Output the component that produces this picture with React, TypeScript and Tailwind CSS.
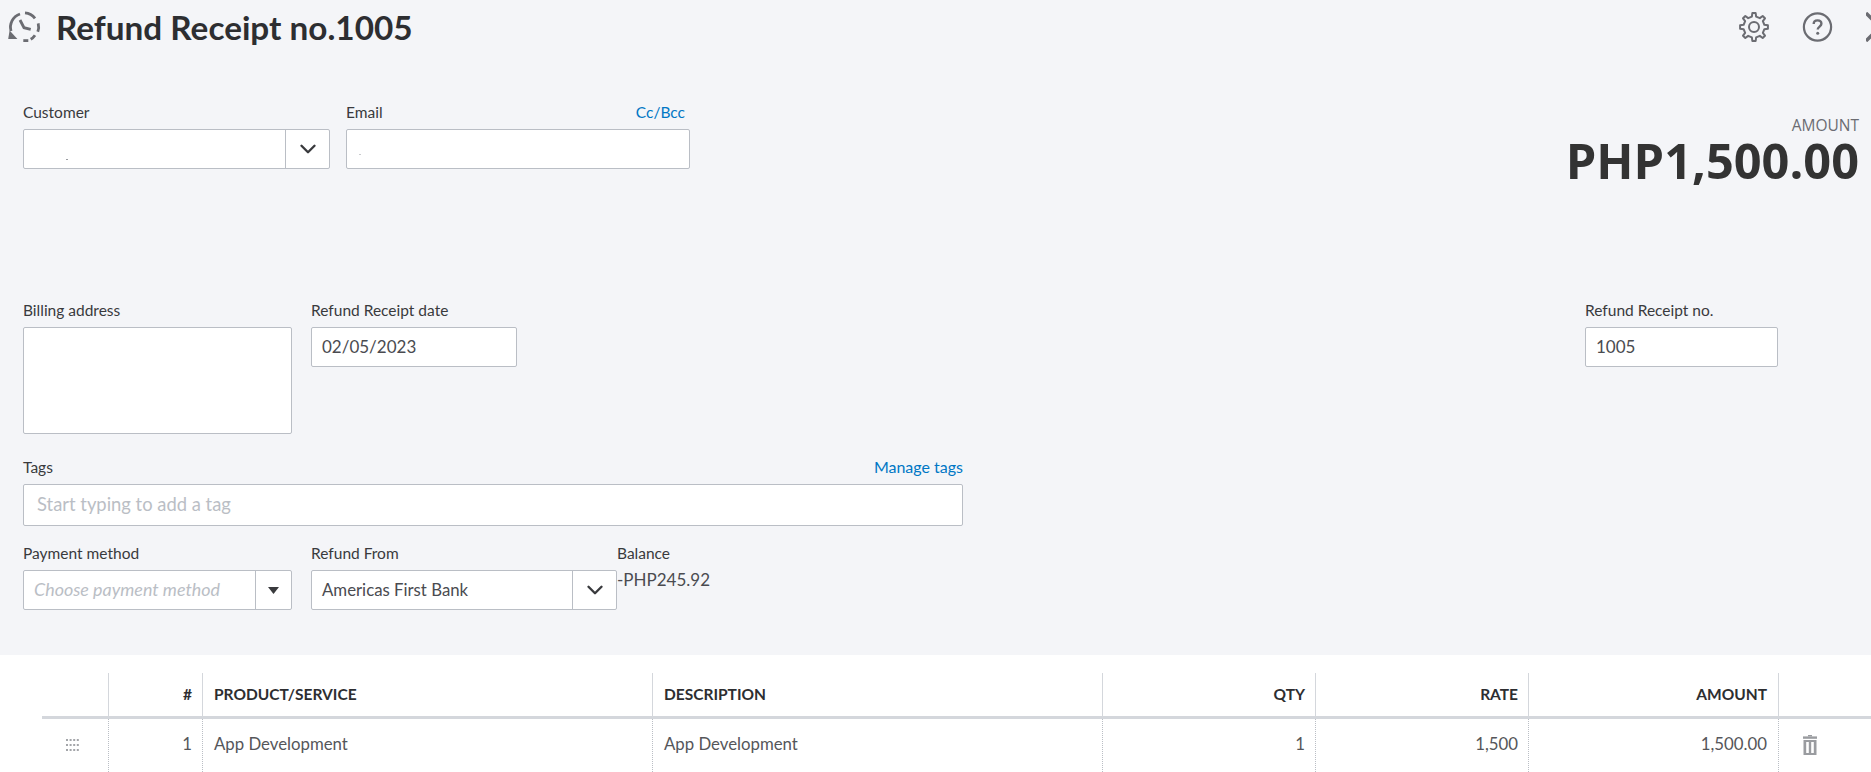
import * as React from "react"
import { ChevronDown } from "lucide-react"

const labelClass = "mb-[6px] flex h-[20px] items-center justify-between pb-[2px] text-[15.5px] leading-[18px] text-[#393a3d]"
const boxClass = "rounded-[2px] border border-[#babec5] bg-white"

function gearPath() {
  const pts: string[] = []
  const teeth = 8
  for (let i = 0; i < teeth; i++) {
    const a = (i / teeth) * Math.PI * 2 - Math.PI / 2
    const step = Math.PI / teeth
    const seq: [number, number][] = [
      [10.6, a - step * 0.52],
      [14, a - step * 0.3],
      [14, a + step * 0.3],
      [10.6, a + step * 0.52],
    ]
    seq.forEach(([r, t]) => {
      pts.push(`${(15 + r * Math.cos(t)).toFixed(2)} ${(15 + r * Math.sin(t)).toFixed(2)}`)
    })
  }
  return "M" + pts.join("L") + "Z"
}

function HistoryIcon() {
  return (
    <svg width="34" height="32" viewBox="0 0 34 32" fill="none" stroke="#6b6c72" strokeWidth="2.8" className="shrink-0">
      <path d="M4 20 A14 14 0 0 1 13 3" />
      <path d="M18 1.8 A14 14 0 0 1 28 7.3" />
      <path d="M31.2 12.3 A14 14 0 0 1 30.8 20.7" />
      <path d="M28 24.2 A14 14 0 0 1 23.7 28.3" />
      <path d="M21.3 29.6 L16.3 29.6" />
      <path d="M13 9 L17 16.7 L23.7 18.3" />
      <path d="M1.2 28 L10.4 28 L2.6 19.6 Z" fill="#6b6c72" stroke="none" />
    </svg>
  )
}

function GearIcon() {
  return (
    <svg width="30" height="30" viewBox="0 0 30 30" fill="none" stroke="#6b6c72" strokeWidth="2" strokeLinejoin="round" className="shrink-0">
      <path d={gearPath()} />
      <circle cx="15" cy="15" r="5" />
    </svg>
  )
}

function HelpIcon() {
  return (
    <svg width="31" height="30" viewBox="0 0 30 30" fill="none" stroke="#6b6c72" strokeWidth="2.2" className="shrink-0">
      <circle cx="15" cy="15" r="13.6" />
      <path d="M11.2 12 C11.2 9.6 13 8.4 15 8.4 C17.2 8.4 18.9 9.7 18.9 11.8 C18.9 14.6 15.2 14.6 15.2 17.6" strokeWidth="2.4" />
      <circle cx="15.2" cy="21.2" r="1.5" fill="#6b6c72" stroke="none" />
    </svg>
  )
}

function TrashIcon() {
  return (
    <svg width="14" height="20" viewBox="0 0 14 20" fill="#9a9ca0">
      <rect x="5" y="0" width="4" height="1.4" />
      <rect x="0" y="1.4" width="14" height="2.4" />
      <path fillRule="evenodd" d="M0.5 5 H13.5 V20 H0.5 Z M3.2 7 V18 H5.8 V7 Z M8.2 7 V18 H10.8 V7 Z" />
    </svg>
  )
}

function GripIcon() {
  const dots = []
  for (let y = 0; y < 3; y++) {
    for (let x = 0; x < 4; x++) {
      dots.push(<rect key={`${x}-${y}`} x={x * 3.6} y={y * 5} width="2" height="2" />)
    }
  }
  return (
    <svg width="13" height="12" viewBox="0 0 13 12" fill="#a3a5a9">
      {dots}
    </svg>
  )
}

const columns = [
  { head: "", body: "", align: "left" },
  { head: "#", body: "1", align: "right" },
  { head: "PRODUCT/SERVICE", body: "App Development", align: "left" },
  { head: "DESCRIPTION", body: "App Development", align: "left" },
  { head: "QTY", body: "1", align: "right" },
  { head: "RATE", body: "1,500", align: "right" },
  { head: "AMOUNT", body: "1,500.00", align: "right" },
  { head: "", body: "", align: "left" },
]

const gridClass = "grid grid-cols-[66px_94px_450px_450px_213px_213px_250px_63px]"

export default function App() {
  return (
    <div className="flex h-[772px] w-[1871px] flex-col overflow-hidden bg-[#f4f5f8] font-['Lato',sans-serif] text-[#393a3d]">
      <header className="flex h-[54px] shrink-0 items-center pl-[7px]">
        <HistoryIcon />
        <h1 className="ml-[15px] text-[33.3px] leading-[54px] font-bold text-[#2d2e31]">Refund Receipt no.1005</h1>
        <div className="ml-auto flex w-[132px] shrink-0 items-center">
          <GearIcon />
          <div className="ml-[33px] shrink-0">
            <HelpIcon />
          </div>
          <svg width="30" height="30" viewBox="0 0 30 30" fill="none" stroke="#6b6c72" strokeWidth="3.4" className="ml-[33px] shrink-0">
            <path d="M0 1 L28 29 M28 1 L0 29" />
          </svg>
        </div>
      </header>

      <section className="flex-1 pr-[12px] pl-[23px]">
        <div className="mt-[49px] flex items-start">
          <div className="w-[307px]">
            <div className={labelClass}>Customer</div>
            <div className={`${boxClass} flex h-[40px]`}>
              <div className="relative flex-1">
                <span className="absolute top-[29px] left-[42px] h-px w-[2px] bg-[#9a9ca1]" />
              </div>
              <div className="flex w-[44px] items-center justify-center border-l border-[#babec5]">
                <ChevronDown size={26} strokeWidth={2.2} className="text-[#393a3d]" />
              </div>
            </div>
          </div>
          <div className="ml-[16px] w-[344px]">
            <div className={labelClass}>
              <span>Email</span>
              <a className="mr-[5px] text-[#0077c5]">Cc/Bcc</a>
            </div>
            <div className={`${boxClass} relative h-[40px]`}>
              <span className="absolute top-[24px] left-[12px] h-px w-[2px] bg-[#c8cacd]" />
            </div>
          </div>
          <div className="ml-auto flex h-[65px] flex-col items-end font-['Open_Sans',sans-serif]">
            <div className="mt-[12px] text-[15.5px] leading-[20px] text-[#6b6c72]">AMOUNT</div>
            <div className="text-[48.7px] leading-[50px] font-bold text-[#333333]">PHP1,500.00</div>
          </div>
        </div>

        <div className="mt-[132px] flex items-start">
          <div className="w-[269px]">
            <div className={labelClass}>Billing address</div>
            <div className={`${boxClass} h-[107px]`} />
          </div>
          <div className="ml-[19px] w-[206px]">
            <div className={labelClass}>Refund Receipt date</div>
            <div className={`${boxClass} flex h-[40px] items-center pl-[10px] text-[17px] text-[#4a4b50]`}>02/05/2023</div>
          </div>
          <div className="ml-[1068px] w-[193px]">
            <div className={labelClass}>Refund Receipt no.</div>
            <div className={`${boxClass} flex h-[40px] items-center pl-[10px] text-[17px] text-[#4a4b50]`}>1005</div>
          </div>
        </div>

        <div className="mt-[24px] w-[940px]">
          <div className={labelClass}>
            <span>Tags</span>
            <a className="text-[16px] text-[#0077c5]">Manage tags</a>
          </div>
          <div className={`${boxClass} flex h-[42px] items-center pl-[13px] text-[18.4px] text-[#babec5]`}>Start typing to add a tag</div>
        </div>

        <div className="mt-[18px] flex items-start">
          <div className="w-[269px]">
            <div className={labelClass}>Payment method</div>
            <div className={`${boxClass} flex h-[40px]`}>
              <div className="flex flex-1 items-center pb-[2px] pl-[10px] text-[17.9px] text-[#babec5] italic">Choose payment method</div>
              <div className="flex w-[36px] items-center justify-center border-l border-[#babec5]">
                <svg width="11" height="7" viewBox="0 0 11 7" fill="#393a3d">
                  <path d="M0 0 H11 L5.5 7 Z" />
                </svg>
              </div>
            </div>
          </div>
          <div className="ml-[19px] w-[306px]">
            <div className={labelClass}>Refund From</div>
            <div className={`${boxClass} flex h-[40px]`}>
              <div className="flex flex-1 items-center pl-[10px] text-[16.8px] text-[#4a4b50]">Americas First Bank</div>
              <div className="flex w-[44px] items-center justify-center border-l border-[#babec5]">
                <ChevronDown size={26} strokeWidth={2.2} className="text-[#393a3d]" />
              </div>
            </div>
          </div>
          <div>
            <div className={labelClass}>Balance</div>
            <div className="text-[17px] leading-[20px] text-[#4a4b50]">-PHP245.92</div>
          </div>
        </div>
      </section>

      <section className="h-[117px] shrink-0 bg-white pt-[18px] pl-[42px]">
        <div className={`${gridClass} h-[46px] border-b-[3px] border-[#d4d7dc]`}>
          {columns.map((col, i) => (
            <div
              key={i}
              className={`flex items-center text-[15.5px] font-bold text-[#2d2e31] ${i > 0 ? "border-l border-[#d4d7dc]" : ""} ${col.align === "right" ? "justify-end" : "justify-start pl-[11px]"} ${i === 6 ? "pr-[11px]" : "pr-[10px]"}`}
            >
              {col.head}
            </div>
          ))}
        </div>
        <div className={`${gridClass} h-[53px]`}>
          {columns.map((col, i) => (
            <div
              key={i}
              className={`flex h-[53px] pt-[15px] text-[16.8px] leading-[20px] text-[#55565a] ${i > 0 ? "border-l border-dotted border-[#babec5]" : ""} ${col.align === "right" ? "justify-end" : "justify-start pl-[11px]"} ${i === 6 ? "pr-[11px]" : "pr-[10px]"}`}
            >
              {i === 0 && (
                <div className="ml-[13px] pt-[5px]">
                  <GripIcon />
                </div>
              )}
              {i === 7 && (
                <div className="ml-[13px] pt-px">
                  <TrashIcon />
                </div>
              )}
              {col.body}
            </div>
          ))}
        </div>
      </section>
    </div>
  )
}
